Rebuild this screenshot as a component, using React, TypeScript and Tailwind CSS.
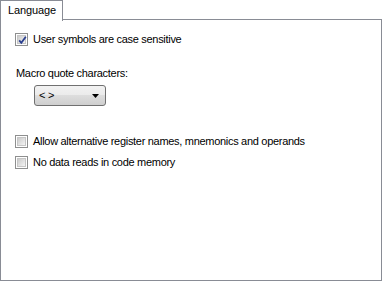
import React from "react";

function CheckBox({ checked }: { checked?: boolean }) {
  return (
    <span className="relative flex h-[13px] w-[13px] shrink-0 items-center justify-center border border-[#8e8f8f] bg-white">
      <span className="h-[9px] w-[9px] border border-[#c6c6c6] bg-gradient-to-br from-[#cbcbcb] to-[#f4f4f4]" />
      {checked && (
        <svg className="absolute left-[1px] top-[1px]" width="11" height="11" viewBox="0 0 11 11">
          <path d="M2.2 5.4 L4.3 7.8 L8.8 1.8" fill="none" stroke="#2a3f8f" strokeWidth="1.8" />
        </svg>
      )}
    </span>
  );
}

function Row({ checked, label, className }: { checked?: boolean; label: string; className?: string }) {
  return (
    <div className={"flex h-[13px] items-center gap-[5px] " + (className ?? "")}>
      <CheckBox checked={checked} />
      <span className="leading-[13px]">{label}</span>
    </div>
  );
}

export default function App() {
  return (
    <div className="h-[283px] w-[385px] bg-white text-[11px] tracking-[-0.3px] text-black [font-family:'Liberation_Sans',Arial,sans-serif]">
      <div className="flex h-[20px] w-[382px]">
        <div className="h-[21px] w-[63px] border-l border-r border-t border-[#898c95] bg-white pl-[7px] pt-[3px] leading-[13px] tracking-[-0.1px]">
          Language
        </div>
        <div className="flex-1 border-b border-[#898c95]" />
      </div>
      <div className="flex h-[261px] w-[382px] flex-col border-b border-l border-r border-[#898c95] pl-[14px] pt-[13px]">
        <Row checked label="User symbols are case sensitive" />
        <div className="ml-[1px] mt-[21px] leading-[13px]">Macro quote characters:</div>
        <div className="ml-[19px] mt-[5px] flex h-[21px] w-[72px] items-center justify-between rounded-[3px] border border-[#707070] bg-[linear-gradient(to_bottom,#f2f2f2_0%,#ebebeb_50%,#dddddd_50%,#cfcfcf_100%)] pl-[4px] pr-[6px]">
          <span className="leading-[13px]">&lt; &gt;</span>
          <svg width="7" height="4" viewBox="0 0 7 4">
            <path d="M0 0 H7 L3.5 4 Z" fill="#000" />
          </svg>
        </div>
        <Row className="mt-[29px]" label="Allow alternative register names, mnemonics and operands" />
        <Row className="mt-[8px]" label="No data reads in code memory" />
      </div>
    </div>
  );
}
